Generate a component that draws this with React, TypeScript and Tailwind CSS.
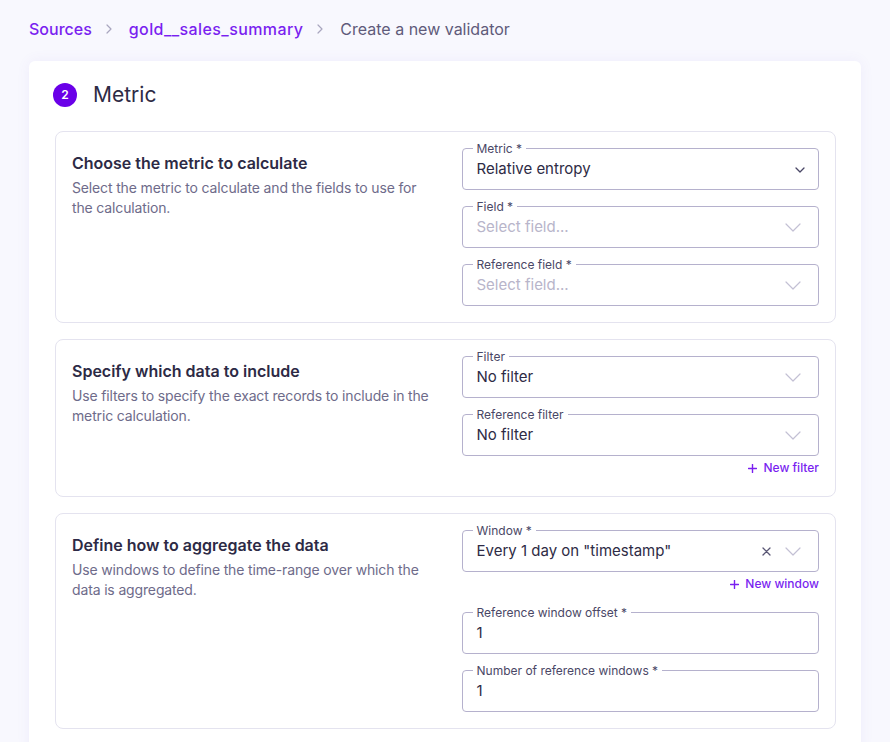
import React from "react";

const FONT = { fontFamily: "Inter, 'Noto Sans', sans-serif" };

function Crumb() {
  return (
    <svg width="6" height="10" viewBox="0 0 6 10" className="ml-[14px] mr-[17px] shrink-0">
      <path d="M1 1l4 4-4 4" fill="none" stroke="#a9a6bf" strokeWidth="1.2" strokeLinecap="round" strokeLinejoin="round" />
    </svg>
  );
}

function Chevron({ small }: { small?: boolean }) {
  if (small) {
    return (
      <svg width="10" height="6" viewBox="0 0 10 6" className="mr-[13px]">
        <path d="M1 1l4 4 4-4" fill="none" stroke="#4a4766" strokeWidth="1.3" strokeLinecap="round" strokeLinejoin="round" />
      </svg>
    );
  }
  return (
    <svg width="16" height="9" viewBox="0 0 16 9" className="mr-[17px]">
      <path d="M1 1l7 7 7-7" fill="none" stroke="#c3c0d4" strokeWidth="1.2" strokeLinecap="round" strokeLinejoin="round" />
    </svg>
  );
}

interface FieldProps {
  label: string;
  value: string;
  placeholder?: boolean;
  select?: boolean;
  smallChevron?: boolean;
  clearable?: boolean;
}

function Field({ label, value, placeholder, select, smallChevron, clearable }: FieldProps) {
  return (
    <div className="relative h-[42px] rounded border border-[#b5b1cd] flex items-center pl-[14px] pt-px">
      <span className="absolute left-[10px] -top-[7px] bg-white px-1 text-[12px] leading-[14px] text-[#4a4766]">
        {label}
      </span>
      <span className={`flex-1 text-[15px] ${placeholder ? "text-[#b8b5ca]" : "text-[#2e2b45]"}`}>{value}</span>
      {clearable && (
        <svg width="9" height="9" viewBox="0 0 9 9" className="mr-[14px]">
          <path d="M1 1l7 7M8 1l-7 7" stroke="#5a5775" strokeWidth="1.3" strokeLinecap="round" />
        </svg>
      )}
      {select && <Chevron small={smallChevron} />}
    </div>
  );
}

function AddLink({ text }: { text: string }) {
  return (
    <div className="h-6 flex items-center justify-end gap-[6px] text-[12px] font-medium text-[#7a1ff0]">
      <svg width="9" height="9" viewBox="0 0 9 9">
        <path d="M4.5 0.5v8M0.5 4.5h8" stroke="#7a1ff0" strokeWidth="1.4" strokeLinecap="round" />
      </svg>
      {text}
    </div>
  );
}

function Section({ title, desc, children }: { title: string; desc: string; children: React.ReactNode }) {
  return (
    <div className="rounded-lg border border-[#e4e3ef] p-4 grid grid-cols-2 gap-x-8">
      <div>
        <div className="mt-[3px] text-[16px] leading-6 font-semibold text-[#2d2a45]">{title}</div>
        <div className="mt-[3px] text-[14px] leading-5 tracking-[-0.15px] text-[#6e6b8a]">{desc}</div>
      </div>
      <div className="flex flex-col">{children}</div>
    </div>
  );
}

export default function App() {
  return (
    <div className="min-h-screen bg-[#f8f8fe] px-[29px] pt-[17px]" style={FONT}>
      <div className="flex items-center h-6 text-[16px] leading-6">
        <span className="text-[#7a1ff0] font-medium">Sources</span>
        <Crumb />
        <span className="text-[#7a1ff0] font-medium tracking-[0.4px]">gold__sales_summary</span>
        <Crumb />
        <span className="text-[#5f5b7a]">Create a new validator</span>
      </div>

      <div className="mt-5 bg-white rounded-md shadow-[0_0_14px_rgba(110,90,210,0.07)] pl-[26px] pr-[25px] pt-[22px] pb-6">
        <div className="flex items-center gap-4 -ml-[2px] mb-6">
          <div className="w-6 h-6 rounded-full bg-[#6a00e8] flex items-center justify-center text-white text-[12px] font-semibold">
            2
          </div>
          <div className="text-[21px] leading-6 text-[#2e2b45]">Metric</div>
        </div>

        <div className="flex flex-col gap-4">
          <Section
            title="Choose the metric to calculate"
            desc="Select the metric to calculate and the fields to use for the calculation."
          >
            <div className="flex flex-col gap-4">
              <Field label="Metric *" value="Relative entropy" select smallChevron />
              <Field label="Field *" value="Select field..." placeholder select />
              <Field label="Reference field *" value="Select field..." placeholder select />
            </div>
          </Section>

          <Section
            title="Specify which data to include"
            desc="Use filters to specify the exact records to include in the metric calculation."
          >
            <div className="flex flex-col gap-4">
              <Field label="Filter" value="No filter" select />
              <Field label="Reference filter" value="No filter" select />
            </div>
            <AddLink text="New filter" />
          </Section>

          <Section
            title="Define how to aggregate the data"
            desc="Use windows to define the time-range over which the data is aggregated."
          >
            <Field label="Window *" value={'Every 1 day on "timestamp"'} select clearable />
            <AddLink text="New window" />
            <div className="flex flex-col gap-4 mt-4">
              <Field label="Reference window offset *" value="1" />
              <Field label="Number of reference windows *" value="1" />
            </div>
          </Section>
        </div>
      </div>
    </div>
  );
}
